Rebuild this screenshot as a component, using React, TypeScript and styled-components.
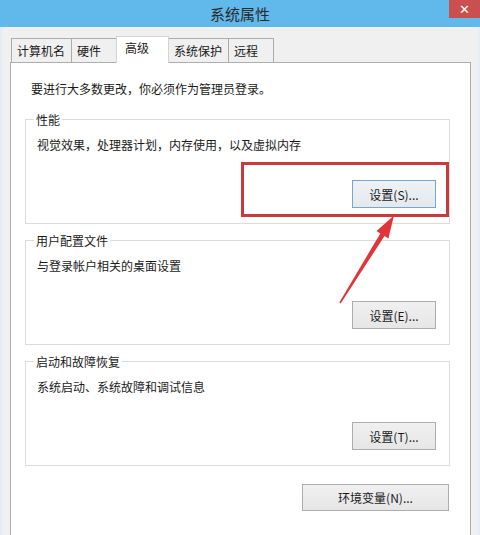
import React from "react";
import styled, { createGlobalStyle } from "styled-components";

const GlobalStyle = createGlobalStyle`
  html, body {
    margin: 0;
    padding: 0;
    background: #f0f0f0;
  }
  * { box-sizing: border-box; }
`;

const FONT = `"Noto Sans CJK SC", "Noto Sans", sans-serif`;

const Window = styled.div`
  position: relative;
  width: 480px;
  height: 535px;
  overflow: hidden;
  display: flex;
  flex-direction: column;
  background: #f0f0f0;
  font-family: ${FONT};
  color: #1a1a1a;
`;

const TitleBar = styled.div`
  height: 27px;
  flex: none;
  display: grid;
  grid-template-columns: 1fr auto 1fr;
  background: #61b8eb;
`;

const Title = styled.div`
  grid-column: 2;
  align-self: center;
  font-size: 15px;
  line-height: 20px;
  color: #2a2a2a;
  padding-top: 1px;
`;

const CloseButton = styled.div`
  grid-column: 3;
  justify-self: end;
  align-self: start;
  width: 31px;
  height: 18px;
  background: #c9504f;
  color: #fff;
  display: flex;
  align-items: center;
  justify-content: center;
  font-family: "DejaVu Sans", sans-serif;
  font-size: 13px;
  font-weight: bold;
  line-height: 1;
`;

const Body = styled.div`
  flex: 1;
  display: flex;
  flex-direction: column;
  padding: 9px 7px 0 8px;
  border-left: 2px solid #dfeef8;
  border-right: 2px solid #e4eef5;
`;

const TabRow = styled.div`
  display: flex;
  align-items: flex-end;
  height: 26px;
  padding-left: 1px;
`;

const Tab = styled.div<{ $active?: boolean }>`
  position: relative;
  z-index: ${(p) => (p.$active ? 2 : 1)};
  min-width: 46px;
  height: ${(p) => (p.$active ? "27px" : "24px")};
  margin-bottom: ${(p) => (p.$active ? "-1px" : "0")};
  margin-left: -1px;
  padding: ${(p) => (p.$active ? "3px 19px 0 8px" : "4px 6px 0 5px")};
  border: 1px solid ${(p) => (p.$active ? "#d4d4d4" : "#acacac")};
  border-bottom: none;
  background: ${(p) => (p.$active ? "#ffffff" : "#f0f0f0")};
  font-size: 12px;
  line-height: 16px;
  white-space: nowrap;
  &:first-child { margin-left: 0; }
`;

const Panel = styled.div`
  flex: 1;
  display: flex;
  flex-direction: column;
  background: #fff;
  border: 1px solid #adadad;
  border-bottom: none;
  padding: 18px 20px 0 14px;
`;

const Notice = styled.div`
  font-size: 12px;
  line-height: 16px;
  margin-left: 6px;
`;

const Groups = styled.div`
  display: flex;
  flex-direction: column;
  gap: 16px;
  margin-top: 22px;
`;

const Group = styled.div`
  height: 105px;
  display: flex;
  flex-direction: column;
  border: 1px solid #dcdcdc;
  padding: 0 13px 0 11px;
`;

const Legend = styled.div`
  align-self: flex-start;
  margin: -8px 0 0 -3px;
  padding: 0 2px;
  background: #fff;
  font-size: 12px;
  line-height: 16px;
`;

const Description = styled.div`
  margin-top: 9px;
  font-size: 12px;
  line-height: 16px;
`;

const Button = styled.div<{ $default?: boolean; $width: number }>`
  width: ${(p) => p.$width}px;
  height: 28px;
  display: flex;
  align-items: center;
  justify-content: center;
  font-size: 12px;
  border: 1px solid ${(p) => (p.$default ? "#7aa5c6" : "#adadad")};
  background: ${(p) =>
    p.$default
      ? "linear-gradient(#eef2f5, #e4e9ee)"
      : "linear-gradient(#f0f0f0, #e6e6e6)"};
  color: #1a1a1a;
`;

const GroupButton = styled(Button)`
  align-self: flex-end;
  margin-top: auto;
  margin-bottom: 15px;
`;

const EnvButton = styled(Button)`
  align-self: flex-end;
  height: 27px;
  margin: 18px 1px 0 0;
`;

/* Annotation: red frame around the performance settings button */
const Highlight = styled.div`
  position: absolute;
  left: 241px;
  top: 162px;
  width: 208px;
  height: 55px;
  border: 3px solid #c83a3c;
  pointer-events: none;
`;

const ArrowLayer = styled.svg`
  position: absolute;
  left: 0;
  top: 0;
  width: 480px;
  height: 535px;
  pointer-events: none;
`;

const groups = [
  { title: "性能", text: "视觉效果，处理器计划，内存使用，以及虚拟内存", button: "设置(S)...", isDefault: true },
  { title: "用户配置文件", text: "与登录帐户相关的桌面设置", button: "设置(E)..." },
  { title: "启动和故障恢复", text: "系统启动、系统故障和调试信息", button: "设置(T)..." },
];

const tabs = ["计算机名", "硬件", "高级", "系统保护", "远程"];

export default function App() {
  return (
    <>
      <GlobalStyle />
      <Window>
        <TitleBar>
          <Title>系统属性</Title>
          <CloseButton>✕</CloseButton>
        </TitleBar>
        <Body>
          <TabRow>
            {tabs.map((t) => (
              <Tab key={t} $active={t === "高级"}>
                {t}
              </Tab>
            ))}
          </TabRow>
          <Panel>
            <Notice>要进行大多数更改，你必须作为管理员登录。</Notice>
            <Groups>
              {groups.map((g) => (
                <Group key={g.title}>
                  <Legend>{g.title}</Legend>
                  <Description>{g.text}</Description>
                  <GroupButton $width={84} $default={g.isDefault}>
                    {g.button}
                  </GroupButton>
                </Group>
              ))}
            </Groups>
            <EnvButton $width={147}>环境变量(N)...</EnvButton>
          </Panel>
        </Body>
        <Highlight />
        <ArrowLayer viewBox="0 0 480 535">
          <polygon
            points="339.3,302.6 380.3,233.4 376.5,231.0 394,215.5 388.4,238.4 384.5,236.0 340.7,303.4"
            fill="#e0353a"
          />
        </ArrowLayer>
      </Window>
    </>
  );
}
